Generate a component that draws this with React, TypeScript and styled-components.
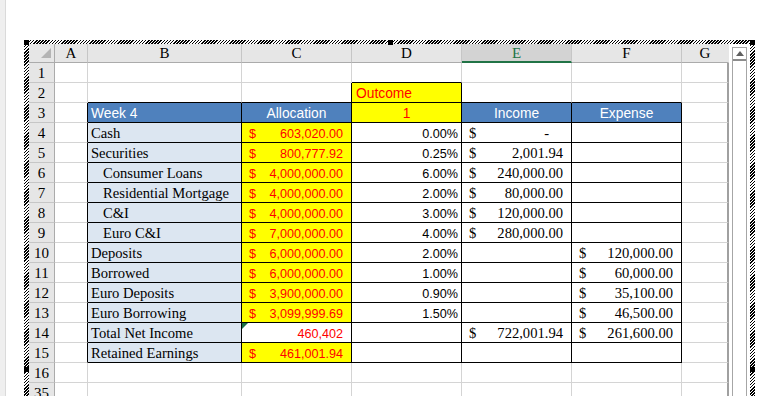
import React from 'react'
import styled, { createGlobalStyle } from 'styled-components'

const GRID = '#d4d4d4'
const BLUE = '#4f81bd'
const PALE = '#dce6f1'
const YELLOW = '#ffff00'
const RED = '#ff0000'

const GlobalStyle = createGlobalStyle`
  html, body {
    margin: 0;
    background: #fff;
    overflow: hidden;
  }
`

const Page = styled.div`
  display: flex;
  align-items: flex-start;
  height: 396px;
`

const LeftStrip = styled.div`
  width: 6px;
  height: 100%;
  box-sizing: border-box;
  background: #efefef;
  border-right: 1px solid #dadada;
`

const Frame = styled.div`
  position: relative;
  margin: 40px 0 0 18px;
  width: 731px;
  height: 660px;
  box-sizing: border-box;
  padding: 4px 5px 0 5px;
  background: repeating-linear-gradient(135deg, #000 0 1.1px, #fff 1.1px 2.2px);
`

const Inner = styled.div`
  display: flex;
  align-items: flex-start;
  height: 100%;
  background: #fff;
`

const Handle = styled.div<{ $x: string; $y: number }>`
  position: absolute;
  width: 5px;
  height: 5px;
  background: #000;
  top: ${(p) => p.$y}px;
  ${(p) => p.$x};
`

const Sheet = styled.div`
  display: grid;
  grid-template-columns: 26px 33px 154px 110px 110px 110px 110px 47px;
  grid-template-rows: 19px repeat(17, 20px);
  width: 700px;
`

const Corner = styled.div`
  position: relative;
  box-sizing: border-box;
  background: #e6e6e6;
  border-right: 1px solid #ababab;
  border-bottom: 1px solid #ababab;
`

const CornerMark = styled.svg`
  position: absolute;
  right: 3px;
  bottom: 4px;
`

const ColHead = styled.div<{ $sel?: boolean; $last?: boolean }>`
  box-sizing: border-box;
  display: flex;
  align-items: center;
  justify-content: center;
  background: ${(p) => (p.$sel ? '#d3d3d3' : '#e6e6e6')};
  border-right: 1px solid ${(p) => (p.$last ? '#e6e6e6' : '#c6c6c6')};
  border-bottom: ${(p) => (p.$sel ? '2px solid #217346' : '1px solid #ababab')};
  color: ${(p) => (p.$sel ? '#217346' : '#000')};
  font-family: 'Liberation Serif', 'Times New Roman', serif;
  font-size: 15px;
  line-height: 1;
  padding-top: 1px;
`

const RowHead = styled.div`
  box-sizing: border-box;
  display: flex;
  align-items: center;
  justify-content: center;
  background: #e6e6e6;
  border-right: 1px solid #ababab;
  border-bottom: 1px solid #c6c6c6;
  font-family: 'Liberation Serif', 'Times New Roman', serif;
  font-size: 15px;
  line-height: 1;
  padding-top: 2px;
`

const Cell = styled.div<{ $r: string; $b: string; $bg?: string; $justify?: string; $pl?: number; $pr?: number; $rw?: number }>`
  position: relative;
  box-sizing: border-box;
  display: flex;
  align-items: flex-end;
  justify-content: ${(p) => p.$justify || 'flex-start'};
  padding: 0 ${(p) => p.$pr ?? 0}px 1px ${(p) => p.$pl ?? 0}px;
  background: ${(p) => p.$bg || '#fff'};
  border-right: ${(p) => p.$rw ?? 1}px solid ${(p) => p.$r};
  border-bottom: 1px solid ${(p) => p.$b};
  overflow: hidden;
  white-space: nowrap;
`

const Sans = styled.span<{ $color?: string; $size?: number }>`
  font-family: 'Liberation Sans', Arial, sans-serif;
  font-size: ${(p) => p.$size ?? 12.6}px;
  line-height: 1;
  color: ${(p) => p.$color || '#000'};
`

const Serif = styled.span`
  font-family: 'Liberation Serif', 'Times New Roman', serif;
  font-size: 14.6px;
  line-height: 1;
  color: #000;
`

const Acct = styled.div`
  display: flex;
  justify-content: space-between;
  align-items: flex-end;
  width: 100%;
`

const Triangle = styled.div`
  position: absolute;
  left: 0;
  top: 0;
  width: 0;
  height: 0;
  border-top: 6px solid #1e7145;
  border-right: 6px solid transparent;
`

const ScrollTrack = styled.div`
  margin: 3px 0 0 3px;
  width: 15px;
  height: 400px;
  box-sizing: border-box;
  border: 1px solid #a6a6a6;
  background: #fff;
`

const UpButton = styled.div`
  display: flex;
  align-items: center;
  justify-content: center;
  height: 11px;
  border-bottom: 2px solid #8c8c8c;
`

type Spec = {
  node?: React.ReactNode
  bg?: string
  justify?: string
  pl?: number
  pr?: number
  mark?: boolean
}

const head = (t: string, left = false): Spec => ({
  bg: BLUE,
  justify: left ? 'flex-start' : 'center',
  pl: left ? 3 : 0,
  node: <Sans $color='#fff' $size={13.8}>{t}</Sans>
})

const label = (t: string, indent = false): Spec => ({
  bg: PALE,
  pl: indent ? 15 : 3,
  node: <Serif>{t}</Serif>
})

const money = (v: string): Spec => ({
  bg: YELLOW,
  pl: 7,
  pr: 8,
  node: (
    <Acct>
      <Sans $color={RED}>$</Sans>
      <Sans $color={RED}>{v}</Sans>
    </Acct>
  )
})

const pct = (v: string): Spec => ({
  justify: 'flex-end',
  pr: 3,
  node: <Sans>{v}</Sans>
})

const acct = (v: string): Spec => ({
  pl: 7,
  pr: v === '-' ? 22 : 8,
  node: (
    <Acct>
      <Serif>$</Serif>
      <Serif>{v}</Serif>
    </Acct>
  )
})

const rows = [1, 2, 3, 4, 5, 6, 7, 8, 9, 10, 11, 12, 13, 14, 15, 16, 35]
const cols = ['A', 'B', 'C', 'D', 'E', 'F', 'G']

const data: Record<string, Spec> = {
  '2-4': { bg: YELLOW, pl: 4, node: <Sans $color={RED} $size={13.8}>Outcome</Sans> },
  '3-2': head('Week 4', true),
  '3-3': head('Allocation'),
  '3-4': { bg: YELLOW, justify: 'center', node: <Sans $color={RED} $size={13.8}>1</Sans> },
  '3-5': head('Income'),
  '3-6': head('Expense'),
  '4-2': label('Cash'),
  '4-3': money('603,020.00'),
  '4-4': pct('0.00%'),
  '4-5': acct('-'),
  '5-2': label('Securities'),
  '5-3': money('800,777.92'),
  '5-4': pct('0.25%'),
  '5-5': acct('2,001.94'),
  '6-2': label('Consumer Loans', true),
  '6-3': money('4,000,000.00'),
  '6-4': pct('6.00%'),
  '6-5': acct('240,000.00'),
  '7-2': label('Residential Mortgage', true),
  '7-3': money('4,000,000.00'),
  '7-4': pct('2.00%'),
  '7-5': acct('80,000.00'),
  '8-2': label('C&I', true),
  '8-3': money('4,000,000.00'),
  '8-4': pct('3.00%'),
  '8-5': acct('120,000.00'),
  '9-2': label('Euro C&I', true),
  '9-3': money('7,000,000.00'),
  '9-4': pct('4.00%'),
  '9-5': acct('280,000.00'),
  '10-2': label('Deposits'),
  '10-3': money('6,000,000.00'),
  '10-4': pct('2.00%'),
  '10-6': acct('120,000.00'),
  '11-2': label('Borrowed'),
  '11-3': money('6,000,000.00'),
  '11-4': pct('1.00%'),
  '11-6': acct('60,000.00'),
  '12-2': label('Euro Deposits'),
  '12-3': money('3,900,000.00'),
  '12-4': pct('0.90%'),
  '12-6': acct('35,100.00'),
  '13-2': label('Euro Borrowing'),
  '13-3': money('3,099,999.69'),
  '13-4': pct('1.50%'),
  '13-6': acct('46,500.00'),
  '14-2': label('Total Net Income'),
  '14-3': { justify: 'flex-end', pr: 8, mark: true, node: <Sans $color={RED}>460,402</Sans> },
  '14-5': acct('722,001.94'),
  '14-6': acct('261,600.00'),
  '15-2': label('Retained Earnings'),
  '15-3': money('461,001.94')
}

const bordered = (r: number, c: number) => (r >= 3 && r <= 15 && c >= 2 && c <= 6) || (r === 2 && c === 4)

const App = () => {
  return (
    <>
      <GlobalStyle />
      <Page>
        <LeftStrip />
        <Frame>
          <Handle $x='left: 0' $y={0} />
          <Handle $x='left: 364px' $y={0} />
          <Handle $x='right: 0' $y={0} />
          <Handle $x='left: 0' $y={327} />
          <Handle $x='right: 0' $y={327} />
          <Inner>
            <Sheet>
              <Corner>
                <CornerMark width='10' height='10' viewBox='0 0 10 10'>
                  <polygon points='10,0 10,10 0,10' fill='#b4b4b4' />
                </CornerMark>
              </Corner>
              {cols.map((c, i) => (
                <ColHead key={c} $sel={c === 'E'} $last={i === cols.length - 1}>
                  {c}
                </ColHead>
              ))}
              {rows.map((r, ri) => {
                const next = rows[ri + 1] ?? 0
                return (
                  <React.Fragment key={r}>
                    <RowHead>{r}</RowHead>
                    {cols.map((_, ci) => {
                      const c = ci + 1
                      const spec = data[`${r}-${c}`] || {}
                      const last = c === 7
                      const right = last ? '#a0a0a0' : bordered(r, c) || bordered(r, c + 1) ? '#000' : GRID
                      const bottom = bordered(r, c) || bordered(next, c) ? '#000' : GRID
                      return (
                        <Cell
                          key={c}
                          $r={right}
                          $b={bottom}
                          $rw={last ? 2 : 1}
                          $bg={spec.bg}
                          $justify={spec.justify}
                          $pl={spec.pl}
                          $pr={spec.pr}
                        >
                          {spec.mark && <Triangle />}
                          {spec.node}
                        </Cell>
                      )
                    })}
                  </React.Fragment>
                )
              })}
            </Sheet>
            <ScrollTrack>
              <UpButton>
                <svg width='8' height='5' viewBox='0 0 8 5'>
                  <polygon points='0,5 8,5 4,0' fill='#606060' />
                </svg>
              </UpButton>
            </ScrollTrack>
          </Inner>
        </Frame>
      </Page>
    </>
  )
}

export default App
